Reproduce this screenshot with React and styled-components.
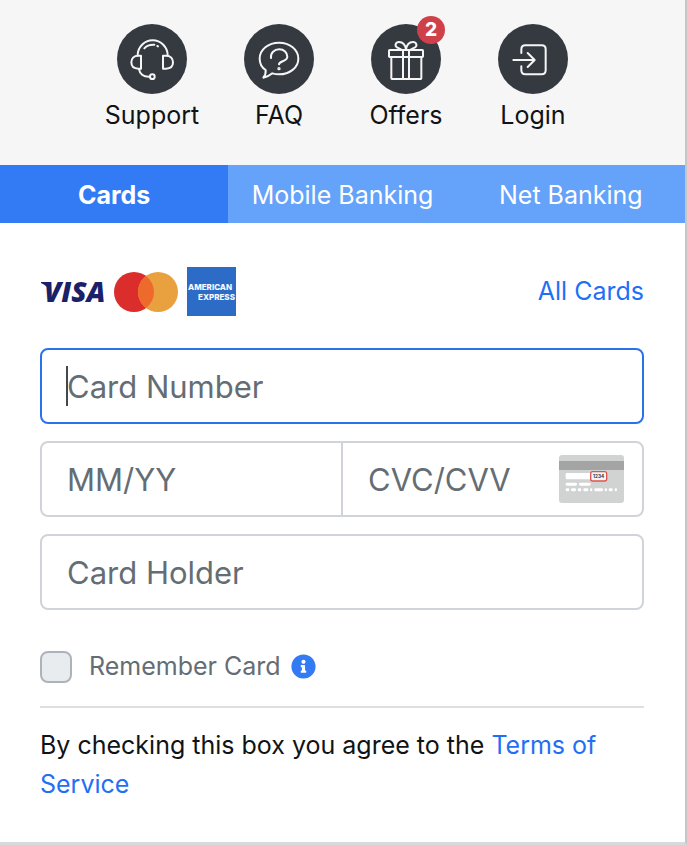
import React, { useState } from "react";
import styled, { createGlobalStyle } from "styled-components";
import { FaInfoCircle } from "react-icons/fa";

const GlobalStyle = createGlobalStyle`
  *, *::before, *::after { box-sizing: border-box; }
  body {
    margin: 0;
    background: #fff;
    color: #101316;
    font-family: Inter, "Liberation Sans", sans-serif;
    font-size: 25px;
    line-height: 39px;
  }
  button, input { font: inherit; }
`;

const Page = styled.div`
  border-right: 2px solid #c6c6c6;
  border-bottom: 3px solid #d6dadd;
`;

const Header = styled.nav`
  display: flex;
  justify-content: center;
  padding: 24px 24px 30px;
  background: #f6f6f6;
`;

const HeaderLink = styled.a`
  display: flex;
  flex: 0 1 127px;
  flex-direction: column;
  align-items: center;
  gap: 2px;
  color: inherit;
  text-decoration: none;
`;

const Disc = styled.span`
  position: relative;
  width: 70px;
  height: 70px;
  border-radius: 50%;
  background: #343a3f;
`;

const DiscIcon = styled.svg`
  display: block;
  width: 100%;
  height: 100%;
  fill: none;
  stroke: #f6f6f6;
  stroke-width: 6;
  stroke-linecap: round;
  stroke-linejoin: round;
`;

const Badge = styled.span`
  position: absolute;
  top: -8px;
  right: -4px;
  width: 28px;
  height: 28px;
  border-radius: 50%;
  background: #cf414a;
  color: #fff;
  font-size: 19px;
  font-weight: 800;
  line-height: 28px;
  text-align: center;
`;

const Tabs = styled.div`
  display: grid;
  grid-template-columns: repeat(3, 1fr);
  background: #65a2f9;
`;

const Tab = styled.button`
  height: 58px;
  padding: 2px 0 0;
  border: 0;
  background: ${(p) => (p.$active ? "#337bf5" : "transparent")};
  color: #fff;
  font-weight: ${(p) => (p.$active ? 700 : 400)};
  white-space: nowrap;
  cursor: pointer;
`;

const Panel = styled.main`
  padding: 44px 41px 38px 40px;
`;

const BrandRow = styled.div`
  display: flex;
  align-items: center;
  justify-content: space-between;
  margin-bottom: 32px;
`;

const Brands = styled.div`
  display: flex;
  align-items: center;
  gap: 9px;
`;

const Logo = styled.svg`
  display: block;
  overflow: visible;
`;

const Link = styled.a`
  color: #1f70f5;
  text-decoration: none;
`;

const Fields = styled.form`
  display: flex;
  flex-direction: column;
  gap: 17px;
`;

const Field = styled.div`
  position: relative;
  display: flex;
  align-items: center;
  height: 76px;
  border: 2px solid ${(p) => (p.$active ? "#2a72ec" : "#d0d4d8")};
  border-radius: 8px;
`;

const Cell = styled.div`
  display: flex;
  flex: 1 1 0;
  align-items: center;
  align-self: stretch;
  min-width: 0;
  padding-right: 18px;

  & + & { border-left: 2px solid #d0d4d8; }
`;

const Input = styled.input`
  flex: 1;
  min-width: 0;
  height: 100%;
  padding: 0 0 0 25px;
  border: 0;
  outline: 0;
  background: transparent;
  color: #14171a;
  font-size: 31px;

  &::placeholder { color: #656d74; opacity: 1; }
  &:placeholder-shown { caret-color: transparent; }
`;

const Caret = styled.span`
  position: absolute;
  left: 24px;
  width: 2px;
  height: 40px;
  background: #43484d;
  pointer-events: none;
`;

const Remember = styled.div`
  display: flex;
  align-items: center;
  margin-top: 37px;
  color: #656d74;
`;

const Checkbox = styled.input`
  appearance: none;
  width: 32px;
  height: 32px;
  margin: 0 17px 0 0;
  border: 2px solid #adb3b9;
  border-radius: 8px;
  background: #e9ecef;

  &:checked { background: #337bf5; }
`;

const InfoButton = styled.button`
  display: flex;
  margin-left: 10px;
  padding: 0;
  border: 0;
  background: none;
  color: #337bf5;
  font-size: 25px;
`;

const Rule = styled.hr`
  height: 2px;
  margin: 20px 0 18px;
  border: 0;
  background: #dedfe0;
`;

const Terms = styled.p`
  margin: 0;
`;

function SupportIcon() {
  return (
    <DiscIcon viewBox="0 0 210 210" aria-hidden="true">
      <path d="M62 94A45 45 0 0 1 152 94" />
      <path d="M72 95V134H64C50 134 43 126 43 115S50 95 64 95Z" />
      <path d="M138 95V134H147C161 134 168 126 168 115S161 95 147 95Z" />
      <path d="M66 135C68 150 80 159 98 158" />
      <circle cx="106" cy="158" r="7" />
      <path d="M82 73Q92 61 112 62M121 66L123 67" />
    </DiscIcon>
  );
}

function FaqIcon() {
  return (
    <DiscIcon viewBox="0 0 210 210" aria-hidden="true">
      <path d="M65 138C53 130 47 118 47 104C47 77 73 56 105 56S163 77 163 104S137 151 105 151C98 151 91 150 85 148C77 155 68 159 58 161C63 155 66 147 65 138Z" />
      <path d="M81 102C79 86 91 76 106 76C120 76 130 86 130 98C130 113 106 110 105 121" />
      <circle cx="105" cy="134" r="2" />
    </DiscIcon>
  );
}

function GiftIcon() {
  return (
    <DiscIcon viewBox="0 0 210 210" aria-hidden="true">
      <rect x="54" y="78" width="102" height="21" rx="2" />
      <path d="M61 99V163Q61 165 63 165H149Q151 165 151 163V99M96 78V165M114 78V165" />
      <path d="M105 77C103 62 95 54 84 54C74 54 70 65 78 70L91 77M105 77C107 62 115 54 126 54C136 54 140 65 132 70L119 77" />
    </DiscIcon>
  );
}

function LoginIcon() {
  return (
    <DiscIcon viewBox="0 0 210 210" aria-hidden="true">
      <path d="M70 87V76Q70 64 82 64H131Q143 64 143 76V139Q143 151 131 151H82Q70 151 70 139V127" />
      <path d="M46 108H109M89 87L110 108L89 129" />
    </DiscIcon>
  );
}

function VisaLogo() {
  return (
    <Logo width="65" height="22" viewBox="0 0 65 22" role="img" aria-label="Visa">
      <path d="M1 1H8L11 12Q8 5 1 2Z" fill="#1a2168" />
      <text x="4" y="21" fill="#1a2168" fontFamily="Open Sans, sans-serif" fontSize="28" fontStyle="italic" fontWeight="800">VISA</text>
    </Logo>
  );
}

function MastercardLogo() {
  return (
    <Logo width="64" height="40" viewBox="0 0 64 40" role="img" aria-label="Mastercard">
      <circle cx="20" cy="20" r="20" fill="#db2d2b" />
      <circle cx="44" cy="20" r="20" fill="#e9a140" />
      <path d="M32 4A20 20 0 0 1 32 36A20 20 0 0 1 32 4Z" fill="#ee6a2c" />
    </Logo>
  );
}

function AmexLogo() {
  return (
    <Logo width="49" height="49" viewBox="0 0 49 49" role="img" aria-label="American Express">
      <rect width="49" height="49" fill="#2c6cc7" />
      <g fill="#f4f8ff" fontFamily="Inter, sans-serif" fontSize="8" fontWeight="800">
        <text x="1" y="23">AMERICAN</text>
        <text x="11" y="33">EXPRESS</text>
      </g>
    </Logo>
  );
}

const dashes = [[20, 11], [36, 15], [56, 11], [73, 15], [93, 7], [106, 26], [137, 7], [149, 12], [167, 7]];

function CardBack() {
  return (
    <Logo width="65" height="48" viewBox="0 0 195 144" aria-hidden="true">
      <rect width="195" height="144" rx="9" fill="#d1d3d2" />
      <rect y="18" width="195" height="27" fill="#a3a4a3" />
      <g fill="#fff">
        <rect x="20" y="54" width="76" height="19" rx="3" />
        <rect x="20" y="83" width="34" height="9" rx="4" />
        <rect x="60" y="83" width="35" height="9" rx="4" />
        {dashes.map(([x, width]) => (
          <rect key={x} x={x} y="100" width={width} height="9" rx="4" />
        ))}
      </g>
      <rect x="95" y="50" width="48" height="28" rx="6" fill="#f5f5f5" stroke="#e0534e" strokeWidth="4" />
      <text x="119" y="69" textAnchor="middle" fill="#333" fontFamily="Inter, sans-serif" fontSize="14" fontWeight="700">1234</text>
    </Logo>
  );
}

const links = [
  { label: "Support", Icon: SupportIcon },
  { label: "FAQ", Icon: FaqIcon },
  { label: "Offers", Icon: GiftIcon, badge: 2 },
  { label: "Login", Icon: LoginIcon },
];

const tabs = ["Cards", "Mobile Banking", "Net Banking"];

export default function App() {
  const [active, setActive] = useState("Cards");
  const [number, setNumber] = useState("");

  return (
    <Page>
      <GlobalStyle />
      <Header>
        {links.map(({ label, Icon, badge }) => (
          <HeaderLink key={label} href="#">
            <Disc>
              <Icon />
              {badge && <Badge>{badge}</Badge>}
            </Disc>
            {label}
          </HeaderLink>
        ))}
      </Header>
      <Tabs role="tablist">
        {tabs.map((name) => (
          <Tab key={name} type="button" role="tab" aria-selected={name === active} $active={name === active} onClick={() => setActive(name)}>
            {name}
          </Tab>
        ))}
      </Tabs>
      <Panel>
        <BrandRow>
          <Brands>
            <VisaLogo />
            <MastercardLogo />
            <AmexLogo />
          </Brands>
          <Link href="#">All Cards</Link>
        </BrandRow>
        <Fields>
          <Field $active>
            <Input aria-label="Card Number" placeholder="Card Number" inputMode="numeric" value={number} onChange={(e) => setNumber(e.target.value)} />
            {number === "" && <Caret />}
          </Field>
          <Field>
            <Cell>
              <Input aria-label="Expiry date" placeholder="MM/YY" />
            </Cell>
            <Cell>
              <Input aria-label="Security code" placeholder="CVC/CVV" />
              <CardBack />
            </Cell>
          </Field>
          <Field>
            <Input aria-label="Card Holder" placeholder="Card Holder" />
          </Field>
        </Fields>
        <Remember>
          <Checkbox type="checkbox" id="remember" />
          <label htmlFor="remember">Remember Card</label>
          <InfoButton type="button" aria-label="About remembering cards">
            <FaInfoCircle />
          </InfoButton>
        </Remember>
        <Rule />
        <Terms>
          By checking this box you agree to the <Link href="#">Terms of Service</Link>
        </Terms>
      </Panel>
    </Page>
  );
}
